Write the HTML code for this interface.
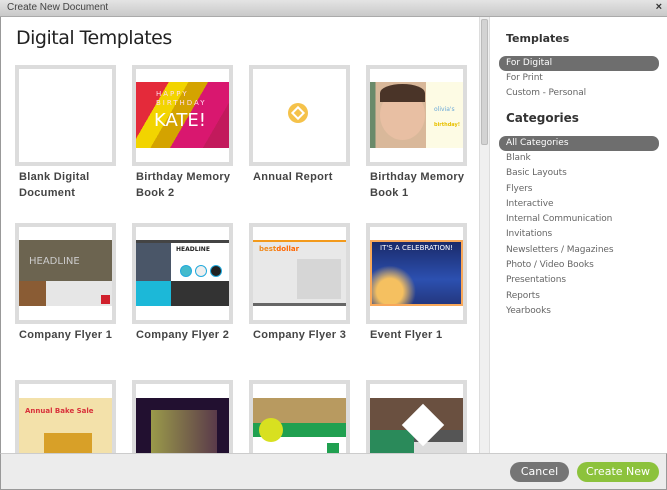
<!DOCTYPE html>
<html><head><meta charset="utf-8"><style>
*{margin:0;padding:0;box-sizing:border-box}
body{width:667px;height:490px;overflow:hidden;background:#fff;font-family:"DejaVu Sans","Liberation Sans",sans-serif;position:relative}
.tb{position:absolute;left:0;top:0;width:667px;height:17px;background:linear-gradient(#e4e4e4,#c9c9c9);border-bottom:1px solid #aaa;font-size:10px;color:#444;padding:2px 0 0 7px;font-family:"Liberation Sans",sans-serif}
.x{position:absolute;right:5px;top:1px;font-size:11px;font-weight:bold;color:#333}
.win{position:absolute;left:0;top:17px;width:667px;height:473px;border-left:1px solid #999;border-right:1px solid #999}
h1{position:absolute;left:16px;top:27px;font-size:19px;font-weight:normal;color:#222;letter-spacing:-0.5px}
.card{position:absolute;width:101px;height:101px;border:4px solid #dcdcdc;background:#fff;overflow:hidden}
.card .im{position:absolute;left:0;top:13px;width:93px;height:66px}
.lbl{position:absolute;font-family:"Liberation Sans",sans-serif;font-size:11px;font-weight:bold;color:#444;line-height:16px;width:110px;letter-spacing:0.3px}
.sb{position:absolute;left:479px;top:17px;width:11px;height:436px;background:#f0f0f0;border-left:1px solid #ddd;border-right:1px solid #ddd}
.thumb{position:absolute;left:481px;top:19px;width:7px;height:126px;background:#d3d3d3;border:1px solid #bbb;border-radius:2px}
.side{position:absolute;left:491px;top:17px;width:176px;height:436px;background:#fff}
.side h2{position:absolute;left:15px;font-size:11px;font-weight:bold;color:#333}
.side .it{position:absolute;left:15px;font-size:9px;color:#666;letter-spacing:-0.1px}
.pill{position:absolute;left:8px;width:160px;height:15px;border-radius:7px;background:#6e6e6e}
.pill span{position:absolute;left:7px;top:2px;font-size:9px;color:#fff}
.foot{position:absolute;left:0;top:453px;width:667px;height:37px;background:#ececec;border-top:1px solid #ccc;border-left:1px solid #999;border-right:1px solid #999;border-bottom:1px solid #999}
.btn{position:absolute;top:462px;height:20px;border-radius:10px;color:#fff;font-size:11px;text-align:center;line-height:20px}
</style></head><body>
<div class="tb">Create New Document<span class="x">×</span></div>
<div class="win"></div>
<h1>Digital Templates</h1>

<div class="card" style="left:15px;top:65px"></div>
<div class="card" style="left:132px;top:65px"><div class="im" style="background:linear-gradient(120deg,#e42a3a 0 25%,#f2d400 25% 40%,#d4a300 40% 55%,#d9176f 55% 80%,#c21a5c 80%)"><div style="position:absolute;left:20px;top:8px;color:#fde;font-size:7px;letter-spacing:2px;line-height:9px">HAPPY<br>BIRTHDAY</div><div style="position:absolute;left:18px;top:28px;color:#fff;font-size:18px">KATE!</div></div></div>
<div class="card" style="left:249px;top:65px"><div style="position:absolute;left:35px;top:34px;width:20px;height:20px;border-radius:50%;background:#f5c24a"></div><div style="position:absolute;left:40px;top:39px;width:10px;height:10px;border:2px solid #fff;transform:rotate(45deg)"></div></div>
<div class="card" style="left:366px;top:65px"><div class="im" style="background:linear-gradient(90deg,#6a8a6a 0 6%,#d9b89a 6% 60%,#fdfbe4 60%)"><div style="position:absolute;left:10px;top:8px;width:45px;height:50px;border-radius:50%;background:#e8bfa3"></div><div style="position:absolute;left:10px;top:2px;width:45px;height:18px;border-radius:50% 50% 0 0;background:#4a3428"></div><div style="position:absolute;left:64px;top:24px;font-size:6px;color:#6aa8d8">olivia's</div><div style="position:absolute;left:64px;top:40px;font-size:5px;color:#e8c000;font-weight:bold">birthday!</div></div></div>
<div class="lbl" style="left:19px;top:169px">Blank Digital<br>Document</div>
<div class="lbl" style="left:136px;top:169px">Birthday Memory<br>Book 2</div>
<div class="lbl" style="left:253px;top:169px">Annual Report</div>
<div class="lbl" style="left:370px;top:169px">Birthday Memory<br>Book 1</div>

<div class="card" style="left:15px;top:223px"><div class="im" style="background:linear-gradient(#6c6450 0 62%,#e6e6e6 62%)"><div style="position:absolute;left:0;top:41px;width:27px;height:25px;background:#8a5c34"></div><div style="position:absolute;left:10px;top:16px;color:#ccc;font-size:10px">HEADLINE</div><div style="position:absolute;right:2px;bottom:2px;width:9px;height:9px;background:#d0202c"></div></div></div>
<div class="card" style="left:132px;top:223px"><div class="im" style="background:#fff;border-top:3px solid #444"><div style="position:absolute;left:0;top:0;width:35px;height:38px;background:#4a5668"></div><div style="position:absolute;left:0;top:38px;width:35px;height:25px;background:#1cb8d8"></div><div style="position:absolute;left:35px;top:38px;width:58px;height:25px;background:#333"></div><div style="position:absolute;left:40px;top:3px;font-size:6px;font-weight:bold;color:#222">HEADLINE</div><div style="position:absolute;left:44px;top:22px;width:12px;height:12px;border-radius:50%;background:#4bc;border:1px solid #2ad"></div><div style="position:absolute;left:59px;top:22px;width:12px;height:12px;border-radius:50%;background:#eee;border:1px solid #2ad"></div><div style="position:absolute;left:74px;top:22px;width:12px;height:12px;border-radius:50%;background:#222;border:1px solid #2ad"></div></div></div>
<div class="card" style="left:249px;top:223px"><div class="im" style="background:#e8e8e8;border-top:2px solid #f39a1c;border-bottom:3px solid #666"><div style="position:absolute;left:6px;top:3px;font-size:7px;font-weight:bold;color:#f08a1c">best<span style="color:#f60">dollar</span></div><div style="position:absolute;left:44px;top:17px;width:44px;height:40px;background:#d6d6d6"></div></div></div>
<div class="card" style="left:366px;top:223px"><div class="im" style="background:radial-gradient(circle at 20% 80%,#f5c060 0 15%,transparent 30%),linear-gradient(#1a2a6a,#2c50b0 60%,#243880);border:2px solid #f8a85a"><div style="position:absolute;left:8px;top:2px;font-size:7px;color:#fff">IT'S A CELEBRATION!</div></div></div>
<div class="lbl" style="left:19px;top:327px">Company Flyer 1</div>
<div class="lbl" style="left:136px;top:327px">Company Flyer 2</div>
<div class="lbl" style="left:253px;top:327px">Company Flyer 3</div>
<div class="lbl" style="left:370px;top:327px">Event Flyer 1</div>

<div class="card" style="left:15px;top:380px"><div class="im" style="top:14px;height:80px;background:#f3e1aa"><div style="position:absolute;left:6px;top:9px;font-size:7px;font-weight:bold;color:#d8303a">Annual Bake Sale</div><div style="position:absolute;left:25px;top:35px;width:48px;height:30px;background:#d8a028"></div></div></div>
<div class="card" style="left:132px;top:380px"><div class="im" style="top:14px;height:80px;background:#221030"><div style="position:absolute;left:15px;top:12px;width:66px;height:50px;background:linear-gradient(90deg,#9a9a4a,#5a3a4a)"></div></div></div>
<div class="card" style="left:249px;top:380px"><div class="im" style="top:14px;height:80px;background:#fff"><div style="position:absolute;left:0;top:0;width:93px;height:25px;background:#b89a60"></div><div style="position:absolute;left:0;top:25px;width:93px;height:14px;background:#20a050"></div><div style="position:absolute;left:6px;top:20px;width:24px;height:24px;border-radius:50%;background:#d8e020"></div><div style="position:absolute;left:74px;top:45px;width:12px;height:10px;background:#20a050"></div></div></div>
<div class="card" style="left:366px;top:380px"><div class="im" style="top:14px;height:80px;background:linear-gradient(#6a5040 0 40%,#555 40% 55%,#ddd 55%)"><div style="position:absolute;left:0;top:32px;width:44px;height:30px;background:#2a8a5a"></div><div style="position:absolute;left:38px;top:12px;width:30px;height:30px;background:#fff;transform:rotate(45deg)"></div></div></div>

<div class="sb"></div><div class="thumb"></div>
<div class="side">
<h2 style="top:15px">Templates</h2>
<div class="pill" style="top:39px"><span>For Digital</span></div>
<div class="it" style="top:56px">For Print</div>
<div class="it" style="top:71px">Custom - Personal</div>
<h2 style="top:94px;font-size:12px">Categories</h2>
<div class="pill" style="top:119px"><span>All Categories</span></div>
<div class="it" style="top:136px">Blank</div>
<div class="it" style="top:151px">Basic Layouts</div>
<div class="it" style="top:167px">Flyers</div>
<div class="it" style="top:182px">Interactive</div>
<div class="it" style="top:197px">Internal Communication</div>
<div class="it" style="top:212px">Invitations</div>
<div class="it" style="top:228px">Newsletters / Magazines</div>
<div class="it" style="top:243px">Photo / Video Books</div>
<div class="it" style="top:258px">Presentations</div>
<div class="it" style="top:274px">Reports</div>
<div class="it" style="top:289px">Yearbooks</div>
</div>

<div class="foot"></div>
<div class="btn" style="left:510px;width:59px;background:#757575">Cancel</div>
<div class="btn" style="left:577px;width:82px;background:#8cc23c">Create New</div>
</body></html>
